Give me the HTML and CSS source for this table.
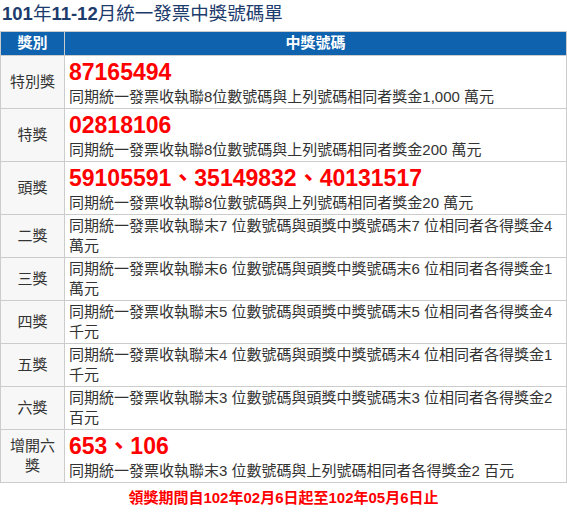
FILE: index.html
```html
<!DOCTYPE html>
<html lang="zh-Hant">
<head>
<meta charset="utf-8">
<title>101年11-12月統一發票中獎號碼單</title>
<link rel="stylesheet" href="styles.css">
</head>
<body>
<div class="title"><span class="tnum">101</span>年<span class="tnum">11-12</span>月統一發票中獎號碼單</div>
<table class="prize">
  <colgroup><col class="c1"><col class="c2"></colgroup>
  <thead>
    <tr><th>獎別</th><th>中獎號碼</th></tr>
  </thead>
  <tbody>
    <tr class="big">
      <td class="name">特別獎</td>
      <td><div class="num">87165494</div><div class="desc">同期統一發票收執聯8位數號碼與上列號碼相同者獎金1,000 萬元</div></td>
    </tr>
    <tr class="big">
      <td class="name">特獎</td>
      <td><div class="num">02818106</div><div class="desc">同期統一發票收執聯8位數號碼與上列號碼相同者獎金200 萬元</div></td>
    </tr>
    <tr class="big">
      <td class="name">頭獎</td>
      <td><div class="num">59105591、35149832、40131517</div><div class="desc">同期統一發票收執聯8位數號碼與上列號碼相同者獎金20 萬元</div></td>
    </tr>
    <tr>
      <td class="name">二獎</td>
      <td class="desc">同期統一發票收執聯末7 位數號碼與頭獎中獎號碼末7 位相同者各得獎金4萬元</td>
    </tr>
    <tr>
      <td class="name">三獎</td>
      <td class="desc">同期統一發票收執聯末6 位數號碼與頭獎中獎號碼末6 位相同者各得獎金1萬元</td>
    </tr>
    <tr>
      <td class="name">四獎</td>
      <td class="desc">同期統一發票收執聯末5 位數號碼與頭獎中獎號碼末5 位相同者各得獎金4千元</td>
    </tr>
    <tr>
      <td class="name">五獎</td>
      <td class="desc">同期統一發票收執聯末4 位數號碼與頭獎中獎號碼末4 位相同者各得獎金1千元</td>
    </tr>
    <tr>
      <td class="name">六獎</td>
      <td class="desc">同期統一發票收執聯末3 位數號碼與頭獎中獎號碼末3 位相同者各得獎金2百元</td>
    </tr>
    <tr class="big">
      <td class="name">增開六獎</td>
      <td><div class="num">653、106</div><div class="desc">同期統一發票收執聯末3 位數號碼與上列號碼相同者各得獎金2 百元</div></td>
    </tr>
  </tbody>
</table>
<div class="period">領獎期間自102年02月6日起至102年05月6日止</div>
</body>
</html>
```
FILE: styles.css
```css
html, body {
  margin: 0;
  padding: 0;
  background: #ffffff;
}
body {
  font-family: "Liberation Sans", "Noto Sans CJK TC", sans-serif;
  color: #333333;
  font-size: 15px;
}
.title {
  font-size: 18.5px;
  font-weight: normal;
  color: #1d3b6c;
  line-height: 26px;
  padding: 1px 0 0 2px;
  height: 31px;
  box-sizing: border-box;
}
.tnum {
  font-weight: bold;
}
.prize {
  border-collapse: collapse;
  table-layout: fixed;
  width: 567px;
}
.c1 { width: 64px; }
.prize th,
.prize td {
  border: 1px solid #cccccc;
  padding: 1px 4px;
  line-height: 20px;
}
.prize th {
  background: #0e62ae;
  color: #ffffff;
  font-size: 15px;
  font-weight: bold;
  text-align: center;
  line-height: 20px;
  padding: 1px 4px 2px;
}
.prize td.name {
  background: #f7f7f7;
  text-align: center;
  vertical-align: middle;
}
.prize td {
  vertical-align: middle;
}
.num {
  color: #ff0000;
  font-weight: bold;
  font-size: 23px;
  line-height: 30px;
}
.desc {
  line-height: 20px;
}
.period {
  text-align: center;
  color: #ff0000;
  font-weight: bold;
  font-size: 15px;
  line-height: 20px;
  padding-top: 5px;
}
```
